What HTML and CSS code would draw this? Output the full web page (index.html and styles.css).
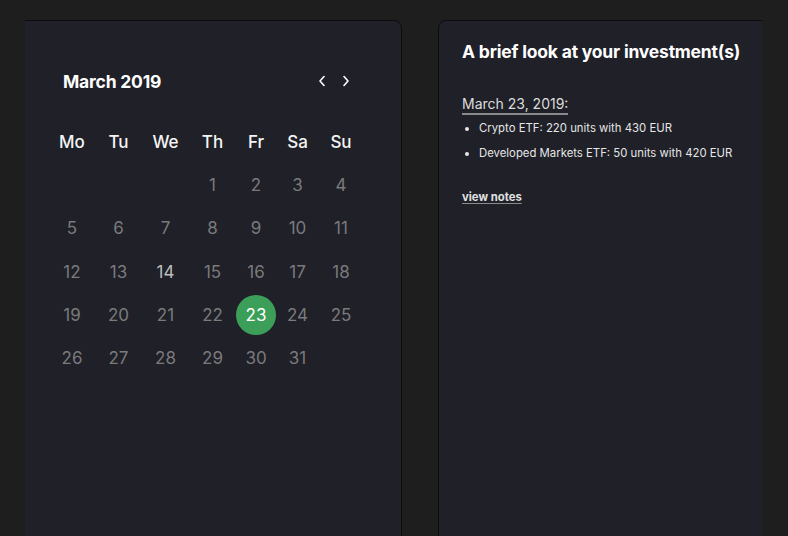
FILE: index.html
```html
<!DOCTYPE html>
<html>
<head>
<meta charset="utf-8">
<link rel="stylesheet" href="styles.css">
</head>
<body>
<div class="viewport">
  <div class="track">
    <section class="card cal-card">
      <div class="cal-head">
        <h2 class="cal-title">March 2019</h2>
        <div class="nav">
          <button class="nav-btn" aria-label="Previous month"><svg width="8" height="12" viewBox="0 0 8 12"><path d="M6 1.5 L2 6 L6 10.5" fill="none" stroke="#fff" stroke-width="1.6" stroke-linecap="round" stroke-linejoin="round"/></svg></button>
          <button class="nav-btn" aria-label="Next month"><svg width="8" height="12" viewBox="0 0 8 12"><path d="M2 1.5 L6 6 L2 10.5" fill="none" stroke="#fff" stroke-width="1.6" stroke-linecap="round" stroke-linejoin="round"/></svg></button>
        </div>
      </div>
      <div class="grid">
        <div class="wd">Mo</div><div class="wd">Tu</div><div class="wd">We</div><div class="wd">Th</div><div class="wd">Fr</div><div class="wd">Sa</div><div class="wd">Su</div>
        <div class="d"></div><div class="d"></div><div class="d"></div><div class="d">1</div><div class="d">2</div><div class="d">3</div><div class="d">4</div>
        <div class="d">5</div><div class="d">6</div><div class="d">7</div><div class="d">8</div><div class="d">9</div><div class="d">10</div><div class="d">11</div>
        <div class="d">12</div><div class="d">13</div><div class="d today">14</div><div class="d">15</div><div class="d">16</div><div class="d">17</div><div class="d">18</div>
        <div class="d">19</div><div class="d">20</div><div class="d">21</div><div class="d">22</div><div class="d"><span class="sel">23</span></div><div class="d">24</div><div class="d">25</div>
        <div class="d">26</div><div class="d">27</div><div class="d">28</div><div class="d">29</div><div class="d">30</div><div class="d">31</div><div class="d"></div>
      </div>
    </section>
    <section class="card info-card">
      <h2 class="info-title">A brief look at your investment(s)</h2>
      <div class="entry-date">March 23, 2019:</div>
      <ul class="entry-list">
        <li>Crypto ETF: 220 units with 430 EUR</li>
        <li>Developed Markets ETF: 50 units with 420 EUR</li>
      </ul>
      <a class="notes" href="#">view notes</a>
    </section>
  </div>
</div>
</body>
</html>
```

FILE: styles.css
```css
* { box-sizing: border-box; }
html, body { margin: 0; padding: 0; }
body {
  background: #1e1e1e;
  font-family: Inter, "Noto Sans", sans-serif;
  color: #fff;
  height: 536px;
  overflow: hidden;
}
.viewport {
  margin-left: 25px;
  width: 737px;
  height: 536px;
  overflow: hidden;
  padding-top: 20px;
}
.track {
  display: flex;
  gap: 36px;
  margin-left: -15px;
  height: 600px;
}
.card {
  flex: none;
  background: #1f2028;
  border: 1px solid #0c0c0e;
  border-radius: 8px;
  height: 600px;
}
.cal-card {
  width: 392px;
  padding: 40px 0 0 38px;
}
.cal-head {
  display: flex;
  align-items: center;
  justify-content: space-between;
  height: 40px;
  padding: 0 11px 0 14px;
  width: 314px;
}
.cal-title {
  margin: 0;
  font-size: 17.5px;
  font-weight: 700;
  letter-spacing: -0.2px;
}
.nav { display: flex; gap: 12px; }
.nav-btn {
  background: none;
  border: 0;
  padding: 0;
  width: 12px;
  height: 16px;
  display: flex;
  align-items: center;
  justify-content: center;
  cursor: pointer;
}
.grid {
  margin-top: 19px;
  display: grid;
  grid-template-columns: 46px 47px 47px 47px 40px 43px 44px;
  grid-auto-rows: 43.3px;
  width: 314px;
}
.wd, .d {
  display: flex;
  align-items: center;
  justify-content: center;
  font-size: 17px;
}
.wd { color: #f4f4f4; font-weight: 500; }
.d { color: #7a7a7c; }
.d.today { color: #bdbdbf; }
.sel {
  width: 40px;
  height: 40px;
  border-radius: 50%;
  background: #3c9f59;
  color: #fff;
  display: flex;
  align-items: center;
  justify-content: center;
}
.info-card {
  width: 420px;
  padding: 20px 23px;
}
.info-title {
  margin: 0;
  font-size: 17.5px;
  font-weight: 700;
  line-height: 22px;
  letter-spacing: -0.2px;
}
.entry-date {
  margin-top: 32px;
  display: inline-block;
  font-size: 14px;
  line-height: 18px;
  color: #dcdcdc;
  border-bottom: 2px solid #8a8a8c;
}
.entry-list {
  margin: 6px 0 0;
  padding-left: 17px;
  font-size: 11.35px;
  line-height: 14px;
  color: #e6e6e6;
}
.entry-list li { margin-bottom: 11px; }
.notes {
  display: inline-block;
  margin-top: 19px;
  font-size: 11.3px;
  font-weight: 700;
  color: #e0e0e0;
  text-decoration: underline;
  text-decoration-color: #8a8a8c;
  text-underline-offset: 2px;
}
```
